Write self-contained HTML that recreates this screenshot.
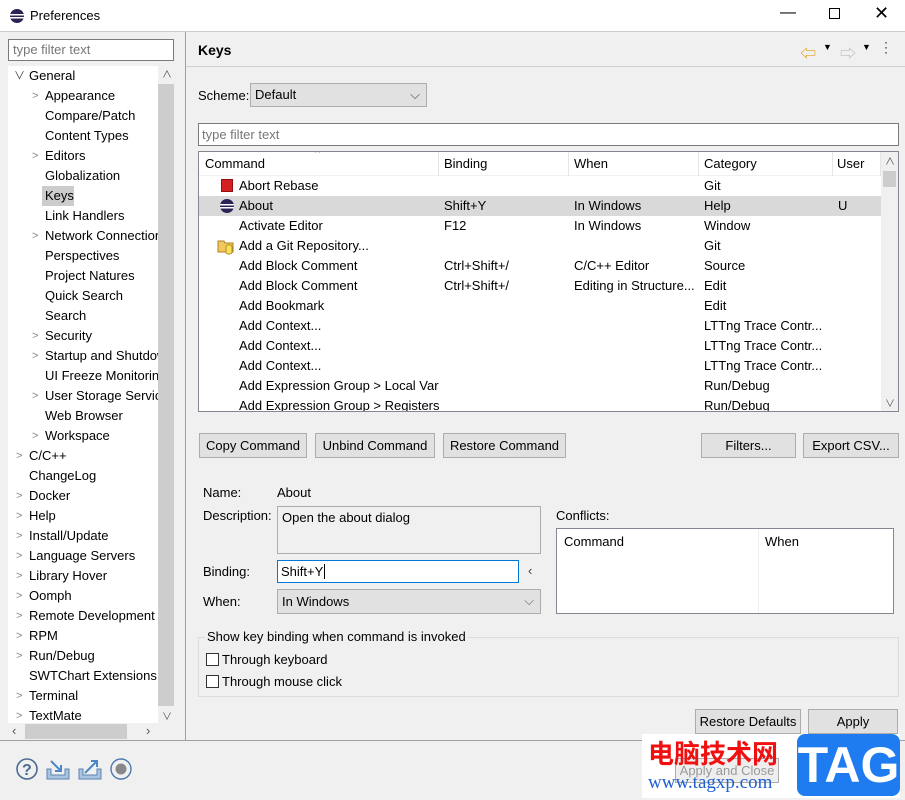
<!DOCTYPE html><html><head><style>
*{box-sizing:border-box}body{margin:0;width:905px;height:800px;background:#f0f0f0;font-family:"Liberation Sans","Noto Sans CJK SC",sans-serif;font-size:13px;color:#000;position:relative;overflow:hidden}
.a{position:absolute;white-space:nowrap}
.btn{position:absolute;height:25px;border:1px solid #adadad;background:#e1e1e1;text-align:center;line-height:23px}
.tr{position:absolute;left:0;height:20px;line-height:20px}
.ch{position:absolute;color:#888;font-size:11px}
</style></head><body>
<div class="a" style="left:0;top:0;width:905px;height:31px;background:#fff"></div>
<svg class="a" style="left:9px;top:8px" width="16" height="16"><circle cx="8" cy="8" r="7" fill="#2c2255"/><rect x="1" y="6" width="14" height="1.5" fill="#fff"/><rect x="1" y="9" width="14" height="1.5" fill="#fff"/></svg>
<div class="a" style="left:30px;top:8px">Preferences</div>
<div class="a" style="left:780px;top:4px;font-size:16px">—</div>
<div class="a" style="left:829px;top:8px;width:11px;height:11px;border:1px solid #000"></div>
<div class="a" style="left:874px;top:3px;font-size:18px">✕</div>
<div class="a" style="left:0;top:31px;width:905px;height:1px;background:#ccc"></div>
<!-- left -->
<div class="a" style="left:8px;top:39px;width:166px;height:22px;background:#fff;border:1px solid #7a7a7a;color:#777;padding:2px 4px">type filter text</div>
<div class="a" style="left:8px;top:66px;width:150px;height:657px;background:#fff;overflow:hidden">
<div class="tr" style="top:0"><span class="ch" style="left:6px;color:#444">∨</span><span class="a" style="left:21px">General</span></div>
<div class="tr" style="top:20px"><span class="ch" style="left:24px">&gt;</span><span class="a" style="left:37px">Appearance</span></div>
<div class="tr" style="top:40px"><span class="a" style="left:37px">Compare/Patch</span></div>
<div class="tr" style="top:60px"><span class="a" style="left:37px">Content Types</span></div>
<div class="tr" style="top:80px"><span class="ch" style="left:24px">&gt;</span><span class="a" style="left:37px">Editors</span></div>
<div class="tr" style="top:100px"><span class="a" style="left:37px">Globalization</span></div>
<div class="tr" style="top:120px"><span class="a" style="left:34px;width:32px;height:20px;background:#ccc"></span><span class="a" style="left:37px">Keys</span></div>
<div class="tr" style="top:140px"><span class="a" style="left:37px">Link Handlers</span></div>
<div class="tr" style="top:160px"><span class="ch" style="left:24px">&gt;</span><span class="a" style="left:37px">Network Connections</span></div>
<div class="tr" style="top:180px"><span class="a" style="left:37px">Perspectives</span></div>
<div class="tr" style="top:200px"><span class="a" style="left:37px">Project Natures</span></div>
<div class="tr" style="top:220px"><span class="a" style="left:37px">Quick Search</span></div>
<div class="tr" style="top:240px"><span class="a" style="left:37px">Search</span></div>
<div class="tr" style="top:260px"><span class="ch" style="left:24px">&gt;</span><span class="a" style="left:37px">Security</span></div>
<div class="tr" style="top:280px"><span class="ch" style="left:24px">&gt;</span><span class="a" style="left:37px">Startup and Shutdown</span></div>
<div class="tr" style="top:300px"><span class="a" style="left:37px">UI Freeze Monitoring</span></div>
<div class="tr" style="top:320px"><span class="ch" style="left:24px">&gt;</span><span class="a" style="left:37px">User Storage Service</span></div>
<div class="tr" style="top:340px"><span class="a" style="left:37px">Web Browser</span></div>
<div class="tr" style="top:360px"><span class="ch" style="left:24px">&gt;</span><span class="a" style="left:37px">Workspace</span></div>
<div class="tr" style="top:380px"><span class="ch" style="left:8px">&gt;</span><span class="a" style="left:21px">C/C++</span></div>
<div class="tr" style="top:400px"><span class="a" style="left:21px">ChangeLog</span></div>
<div class="tr" style="top:420px"><span class="ch" style="left:8px">&gt;</span><span class="a" style="left:21px">Docker</span></div>
<div class="tr" style="top:440px"><span class="ch" style="left:8px">&gt;</span><span class="a" style="left:21px">Help</span></div>
<div class="tr" style="top:460px"><span class="ch" style="left:8px">&gt;</span><span class="a" style="left:21px">Install/Update</span></div>
<div class="tr" style="top:480px"><span class="ch" style="left:8px">&gt;</span><span class="a" style="left:21px">Language Servers</span></div>
<div class="tr" style="top:500px"><span class="ch" style="left:8px">&gt;</span><span class="a" style="left:21px">Library Hover</span></div>
<div class="tr" style="top:520px"><span class="ch" style="left:8px">&gt;</span><span class="a" style="left:21px">Oomph</span></div>
<div class="tr" style="top:540px"><span class="ch" style="left:8px">&gt;</span><span class="a" style="left:21px">Remote Development</span></div>
<div class="tr" style="top:560px"><span class="ch" style="left:8px">&gt;</span><span class="a" style="left:21px">RPM</span></div>
<div class="tr" style="top:580px"><span class="ch" style="left:8px">&gt;</span><span class="a" style="left:21px">Run/Debug</span></div>
<div class="tr" style="top:600px"><span class="a" style="left:21px">SWTChart Extensions</span></div>
<div class="tr" style="top:620px"><span class="ch" style="left:8px">&gt;</span><span class="a" style="left:21px">Terminal</span></div>
<div class="tr" style="top:640px"><span class="ch" style="left:8px">&gt;</span><span class="a" style="left:21px">TextMate</span></div>
</div>
<div class="a" style="left:158px;top:65px;width:16px;height:658px;background:#f0f0f0"></div>
<div class="a" style="left:158px;top:84px;width:16px;height:622px;background:#cdcdcd"></div>
<div class="a" style="left:162px;top:66px;font-size:10px;color:#555">∧</div>
<div class="a" style="left:162px;top:708px;font-size:10px;color:#555">∨</div>
<div class="a" style="left:8px;top:723px;width:166px;height:17px;background:#f0f0f0"></div>
<div class="a" style="left:25px;top:724px;width:102px;height:15px;background:#cdcdcd"></div>
<div class="a" style="left:12px;top:723px;color:#555">‹</div><div class="a" style="left:146px;top:723px;color:#555">›</div>
<div class="a" style="left:185px;top:32px;width:1px;height:708px;background:#a0a0a0"></div>
<div class="a" style="left:0;top:740px;width:905px;height:1px;background:#a0a0a0"></div>
<!-- bottom icons -->
<svg class="a" style="left:15px;top:757px" width="120" height="26"><circle cx="12" cy="12" r="10" fill="none" stroke="#4a6a90" stroke-width="1.6"/><text x="7" y="18" font-size="16" font-weight="bold" fill="#4a6a90" font-family="Liberation Sans">?</text>
<path d="M32 12v10h22v-10h-4v6h-14v-6z" fill="#a9c4e0" stroke="#5a84b0"/><path d="M36 4l10 10m0-6v6h-6" stroke="#4a86c8" stroke-width="2" fill="none"/>
<path d="M64 12v10h22v-10h-4v6h-14v-6z" fill="#a9c4e0" stroke="#5a84b0"/><path d="M70 16l12-12m-6 0h6v6" stroke="#4a86c8" stroke-width="2" fill="none"/>
<circle cx="106" cy="12" r="10" fill="none" stroke="#4a78b0" stroke-width="1.4"/><circle cx="106" cy="12" r="5.5" fill="#888"/></svg>
<!-- right -->
<div class="a" style="left:198px;top:42px;font-weight:bold;font-size:14px">Keys</div>
<div class="a" style="left:800px;top:40px;color:#e0a020;font-size:16px">⇦</div><div class="a" style="left:823px;top:42px;font-size:9px">▼</div>
<div class="a" style="left:840px;top:40px;color:#bbb;font-size:16px">⇨</div><div class="a" style="left:862px;top:42px;font-size:9px">▼</div>
<div class="a" style="left:884px;top:40px;font-size:12px;line-height:5px">·<br>·<br>·</div>
<div class="a" style="left:186px;top:66px;width:719px;height:1px;background:#d0d0d0"></div>
<div class="a" style="left:198px;top:88px">Scheme:</div>
<div class="a" style="left:250px;top:83px;width:177px;height:24px;border:1px solid #adadad;background:#e1e1e1;padding:3px 4px">Default<span class="a" style="right:6px;top:3px;color:#444">⌵</span></div>
<div class="a" style="left:198px;top:123px;width:701px;height:23px;background:#fff;border:1px solid #7a7a7a;color:#777;padding:3px 3px">type filter text</div>
<div class="a" style="left:198px;top:151px;width:701px;height:261px;background:#fff;border:1px solid #828790;overflow:hidden">
<div class="a" style="left:0;top:0;width:700px;height:24px;border-bottom:1px solid #f0f0f0"></div>
<div class="a" style="left:116px;top:-4px;font-size:10px;color:#666">^</div>
<div class="a" style="left:6px;top:4px">Command</div><div class="a" style="left:239px;top:0;width:1px;height:24px;background:#e5e5e5"></div>
<div class="a" style="left:245px;top:4px">Binding</div><div class="a" style="left:369px;top:0;width:1px;height:24px;background:#e5e5e5"></div>
<div class="a" style="left:375px;top:4px">When</div><div class="a" style="left:499px;top:0;width:1px;height:24px;background:#e5e5e5"></div>
<div class="a" style="left:505px;top:4px">Category</div><div class="a" style="left:633px;top:0;width:1px;height:24px;background:#e5e5e5"></div>
<div class="a" style="left:638px;top:4px">User</div><div class="a" style="left:681px;top:0;width:1px;height:24px;background:#e5e5e5"></div>
<div class="a" style="left:0;top:44px;width:682px;height:20px;background:#d9d9d9"></div>
<div class="a" style="left:682px;top:0;width:17px;height:260px;background:#f0f0f0"></div>
<div class="a" style="left:684px;top:19px;width:13px;height:16px;background:#cdcdcd"></div>
<div class="a" style="left:686px;top:1px;font-size:10px;color:#555">∧</div><div class="a" style="left:686px;top:243px;font-size:10px;color:#555">∨</div>
<div class="a" style="left:22px;top:27px;width:12px;height:13px;background:#d42020;border:1px solid #901010"></div>
<svg class="a" style="left:20px;top:46px" width="16" height="16"><circle cx="8" cy="8" r="7" fill="#2c2255"/><rect x="1" y="6" width="14" height="1.5" fill="#fff"/><rect x="1" y="9" width="14" height="1.5" fill="#fff"/></svg>
<svg class="a" style="left:18px;top:85px" width="18" height="18"><path d="M1 4h6l1 2h8v9H1z" fill="#f0c860" stroke="#b08020"/><rect x="9" y="8" width="6" height="9" rx="2" fill="#f8e060" stroke="#b09020"/></svg>
<div style="position:absolute;left:40px;top:24px;line-height:20px">Abort Rebase<br>About<br>Activate Editor<br>Add a Git Repository...<br>Add Block Comment<br>Add Block Comment<br>Add Bookmark<br>Add Context...<br>Add Context...<br>Add Context...<br>Add Expression Group &gt; Local Var<br>Add Expression Group &gt; Registers</div>
<div style="position:absolute;left:240px;top:24px;width:130px;height:240px;padding-left:5px;line-height:20px;overflow:hidden"><br>Shift+Y<br>F12<br><br>Ctrl+Shift+/<br>Ctrl+Shift+/</div>
<div style="position:absolute;left:375px;top:24px;line-height:20px"><br>In Windows<br>In Windows<br><br>C/C++ Editor<br>Editing in Structure...</div>
<div style="position:absolute;left:505px;top:24px;line-height:20px">Git<br>Help<br>Window<br>Git<br>Source<br>Edit<br>Edit<br>LTTng Trace Contr...<br>LTTng Trace Contr...<br>LTTng Trace Contr...<br>Run/Debug<br>Run/Debug</div>
<div style="position:absolute;left:639px;top:44px;line-height:20px">U</div>
</div>
<div class="btn" style="left:199px;top:433px;width:108px">Copy Command</div>
<div class="btn" style="left:315px;top:433px;width:120px">Unbind Command</div>
<div class="btn" style="left:443px;top:433px;width:123px">Restore Command</div>
<div class="btn" style="left:701px;top:433px;width:95px">Filters...</div>
<div class="btn" style="left:803px;top:433px;width:96px">Export CSV...</div>
<div class="a" style="left:203px;top:485px">Name:</div><div class="a" style="left:277px;top:485px">About</div>
<div class="a" style="left:203px;top:508px">Description:</div>
<div class="a" style="left:277px;top:506px;width:264px;height:48px;border:1px solid #adadad;padding:3px 4px">Open the about dialog</div>
<div class="a" style="left:556px;top:508px">Conflicts:</div>
<div class="a" style="left:556px;top:528px;width:338px;height:86px;background:#fff;border:1px solid #828790"><span class="a" style="left:7px;top:5px">Command</span><span class="a" style="left:201px;top:0;width:1px;height:84px;background:#eee"></span><span class="a" style="left:208px;top:5px">When</span></div>
<div class="a" style="left:203px;top:564px">Binding:</div>
<div class="a" style="left:277px;top:560px;width:242px;height:23px;background:#fff;border:1px solid #0078d7;padding:3px 3px">Shift+Y<span style="border-left:1px solid #000;margin-left:1px"></span></div>
<div class="a" style="left:528px;top:563px;color:#444">‹</div>
<div class="a" style="left:203px;top:594px">When:</div>
<div class="a" style="left:277px;top:589px;width:264px;height:25px;border:1px solid #adadad;background:#e1e1e1;padding:4px 4px">In Windows<span class="a" style="right:6px;top:3px;color:#666">⌵</span></div>
<div class="a" style="left:198px;top:637px;width:701px;height:60px;border:1px solid #dcdcdc"></div>
<div class="a" style="left:205px;top:629px;background:#f0f0f0;padding:0 2px">Show key binding when command is invoked</div>
<div class="a" style="left:206px;top:653px;width:13px;height:13px;border:1px solid #333;background:#fff"></div><div class="a" style="left:222px;top:652px">Through keyboard</div>
<div class="a" style="left:206px;top:675px;width:13px;height:13px;border:1px solid #333;background:#fff"></div><div class="a" style="left:222px;top:674px">Through mouse click</div>
<div class="btn" style="left:695px;top:709px;width:106px">Restore Defaults</div>
<div class="btn" style="left:808px;top:709px;width:90px">Apply</div>
<!-- watermark -->
<div class="a" style="left:642px;top:734px;width:258px;height:64px;background:#fff"></div>
<div class="btn" style="left:675px;top:758px;width:104px;color:#999;background:#eee">Apply and Close</div>
<div class="a" style="left:648px;top:734px;color:#f01010;font-size:26px;font-weight:bold;font-family:'Noto Sans CJK SC',sans-serif">电脑技术网</div>
<div class="a" style="left:648px;top:772px;color:#2060d0;font-size:19px;font-family:'Liberation Serif',serif">www.tagxp.com</div>
<div class="a" style="left:797px;top:734px;width:103px;height:62px;background:#1e7cf0;border-radius:8px;color:#fff;font-size:50px;font-weight:bold;text-align:center;line-height:62px">TAG</div>
</body></html>
